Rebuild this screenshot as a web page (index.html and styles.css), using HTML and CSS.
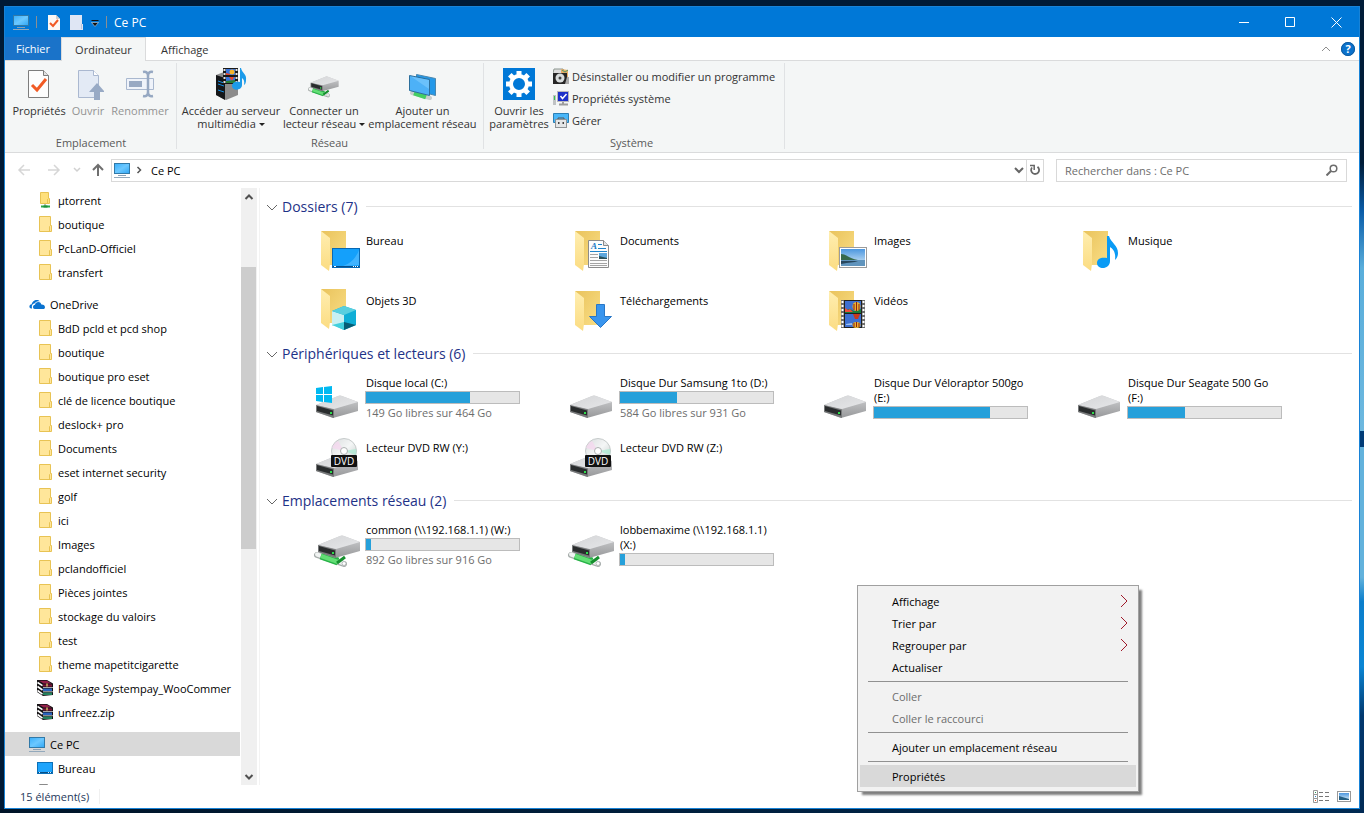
FILE: index.html
```html
<!DOCTYPE html>
<html lang="fr">
<head>
<meta charset="utf-8">
<title>Ce PC</title>
<link rel="stylesheet" href="styles.css">
</head>
<body>
<svg class="defs" aria-hidden="true">
  <defs>
    <linearGradient id="gScreen" x1="0" y1="0" x2="1" y2="1"><stop offset="0" stop-color="#38aefb"/><stop offset=".5" stop-color="#6cc8ff"/><stop offset="1" stop-color="#2fa6f5"/></linearGradient>
    <linearGradient id="gBack" x1="0" y1="0" x2="1" y2="1"><stop offset="0" stop-color="#e9c35c"/><stop offset="1" stop-color="#fade86"/></linearGradient>
    <linearGradient id="gFront" x1="0" y1="0" x2="0" y2="1"><stop offset="0" stop-color="#ffeeb0"/><stop offset="1" stop-color="#fbdc82"/></linearGradient>
    <linearGradient id="gTop" x1="0" y1="0" x2="1" y2="1"><stop offset="0" stop-color="#d4d5d7"/><stop offset="1" stop-color="#e6e7e9"/></linearGradient>
    <linearGradient id="gSide" x1="0" y1="0" x2="0" y2="1"><stop offset="0" stop-color="#cfd0d2"/><stop offset="1" stop-color="#97989a"/></linearGradient>
    <linearGradient id="gDisc" x1="0" y1="0" x2="1" y2="1"><stop offset="0" stop-color="#d9dcdd"/><stop offset=".5" stop-color="#f4f6f6"/><stop offset="1" stop-color="#bfc8c6"/></linearGradient>
    <linearGradient id="gSky" x1="0" y1="0" x2="0" y2="1"><stop offset="0" stop-color="#4c97df"/><stop offset="1" stop-color="#d9ecf8"/></linearGradient>
  </defs>
  <symbol id="pc" viewBox="0 0 16 16"><rect x=".5" y="1.500" width="15" height="10" fill="url(#gScreen)" stroke="#3179a8"/><path d="M4 13.500h8" stroke="#8aa0b4"/><path d="M0 15.500h16" stroke="#93a9bc"/></symbol>
  <symbol id="folder" viewBox="0 0 16 16"><path d="M2.500.5h11v9h1v6h-12z" fill="#ffe69a" stroke="#e8c354"/><path d="M12.500 15V10.500l1-1" fill="none" stroke="#e8c354"/></symbol>
  <symbol id="netfolder" viewBox="0 0 16 16"><path d="M3.500.5h8v6h1v5h-9z" fill="#ffe07c" stroke="#e8c354"/><path d="M10.500 11V7" stroke="#e8c354"/><path d="M8 12v2" stroke="#6f8b72"/><path d="M4 14.500h9" stroke="#2ba84a" stroke-width="2"/><path d="M6.500 13.500h4v2h-4z" fill="#1f8f3b"/></symbol>
  <symbol id="onedrive" viewBox="0 0 16 16"><path d="M2.200 12.500C-.6 12 .1 8.300 2.700 8.300 3 4.500 8.300 2.300 10.800 5.300 7.500 4.500 6 6.800 5.400 7.500 3.300 7.600 2.300 10 3.100 12.500z" fill="#0a72cf"/><path d="M5.800 13C3.300 13 3.500 8.700 6 8.700 6.600 5.300 11.600 5 12.400 8.500 16.800 8.400 16.800 13 14.200 13z" fill="#0a72cf"/></symbol>
  <symbol id="rar" viewBox="0 0 16 16"><path d="M0 0h10l6 3.500V15l-10 1-6-4z" fill="#141214"/><path d="M2 .8h8l4.500 2.700H6.500z" fill="#94204a"/><path d="M6 4.500h9v2H6z" fill="#7d1338"/><path d="M6 8.500h9v2.500H6z" fill="#2a63bd"/><path d="M6 12.500h9V15H6z" fill="#23805c"/><path d="M.5 2.500l5 3.200M.5 6.500l5 3.500M.5 10.500l5 3.700" stroke="#fff" stroke-width="1.600"/><path d="M6 7.500h10M6 11.700h10" stroke="#e9e9e9" stroke-width=".7"/><path d="M9 3.500h2v3H9z" fill="#d8c068" opacity=".7"/></symbol>
  <symbol id="desk16" viewBox="0 0 16 16"><rect x=".5" y="2.500" width="15" height="11" fill="#1ea4fc" stroke="#0b70b8"/><path d="M1 12.500h14" stroke="#084e86"/><path d="M2 12.500h1m8 0h1m1 0h1" stroke="#d5ecfb"/></symbol>
  <symbol id="page16" viewBox="0 0 16 16"><path d="M2.500.5h8l3 3v12h-11z" fill="#fff" stroke="#8a8a8a"/></symbol>

  <symbol id="fbase" viewBox="0 0 48 48"><path d="M8 5h25v34H16z" fill="url(#gBack)"/><path d="M8 5l9 7v26l-1 7-8-6z" fill="url(#gFront)"/></symbol>
  <symbol id="f-desktop" viewBox="0 0 48 48"><use href="#fbase"/><rect x="19.500" y="22.500" width="27" height="19" fill="#14a0fb" stroke="#0868b3"/><path d="M46 24v15l-16 1c8-3 13-8 16-16z" fill="#4cb8ff" opacity=".8"/><path d="M20 40.500h26" stroke="#064f8b"/><path d="M21 40.500h2m17 0h1m1 0h1m1 0h1" stroke="#fff"/></symbol>
  <symbol id="f-docs" viewBox="0 0 48 48"><use href="#fbase"/><path d="M21.500 14.500h15l5 5v22h-20z" fill="#fcfcfc" stroke="#8b8b8b"/><path d="M36.500 14.500v5h5" fill="#e3e3e3" stroke="#8b8b8b"/><path d="M31 18.500h4m-4 4h8M23 25.500h17" stroke="#1d83cb"/><path d="M23 28.500h8m-8 3h8m-8 3h17m-17 3h17m-17 2h17" stroke="#a4a4a4"/><rect x="32" y="27" width="8" height="6" fill="#5ca6dc"/><path d="M32 30l8 2v1h-8z" fill="#28505a"/></symbol>
  <symbol id="f-images" viewBox="0 0 48 48"><use href="#fbase"/><rect x="18.500" y="21.500" width="27" height="20" fill="#fff" stroke="#9b9b9b"/><rect x="20" y="23" width="24" height="17" fill="url(#gSky)"/><path d="M20 28c5 0 7 4 17 6H20z" fill="#37694c"/><path d="M20 34h24v6H20z" fill="#6094bd"/><path d="M20 38c8-2 13-1 17-3H20z" fill="#28475d"/></symbol>
  <symbol id="f-music" viewBox="0 0 48 48"><use href="#fbase"/><path d="M32 10h2c2 7 9 9 9 17 0 3-1 5-3 7 1-8-2-11-5-13v14c0 9-13 9-13 2 0-5 5-6 10-5z" fill="#0a9bf5"/></symbol>
  <symbol id="f-3d" viewBox="0 0 48 48"><use href="#fbase" y="-2"/><path d="M19 25l12-5 12 4v15l-12 5-12-6z" fill="#0faed6"/><path d="M19 25l12 4v8l-12 3z" fill="#c9f0f2"/><path d="M19 25l12-5 12 4-12 5z" fill="#59cfdf"/><path d="M19 39l12-3v8z" fill="#43d0dd"/><path d="M31 36l12 3-12 5z" fill="#075d75"/></symbol>
  <symbol id="f-down" viewBox="0 0 48 48"><use href="#fbase"/><path d="M29.500 18.500h8v12h7L33.500 41.500 22.500 30.500h7z" fill="#3995ee" stroke="#2877c7"/></symbol>
  <symbol id="film" viewBox="0 0 24 28"><path d="M0 0h24v28H0z" fill="#6c6c6c"/><path d="M1.500 1v27M22.500 1v27" stroke="#fff" stroke-width="2" stroke-dasharray="2 2"/><path d="M3 0h18v28H3z" fill="#20201d"/><path d="M4 1h16v12H4zM4 14h16v13H4z" fill="#3d6fd0"/><path d="M4 10l5-1 4 2 7-2v4H4z" fill="#1c7c38"/><path d="M4 8l3 2 2-1 3 3H4z" fill="#f04c38"/><ellipse cx="15.500" cy="6.500" rx="4" ry="4.500" fill="#e9b32c"/><path d="M13 4v6m2.500-8v9m2.500-7v6" stroke="#8d2018"/><path d="M12 14h7l-2 5h-3z" fill="#c9391d"/><path d="M5 24l6-1v2H5z" fill="#9cc0ee"/><ellipse cx="15.500" cy="25" rx="4" ry="3" fill="#e9b32c"/><path d="M13 23v4m2.500-5v5m2.500-4v4" stroke="#8d2018"/></symbol>
  <symbol id="f-video" viewBox="0 0 48 48"><use href="#fbase"/><use href="#film" x="20" y="14" width="24" height="28"/></symbol>

  <symbol id="drivebody" viewBox="0 0 48 48"><path d="M3 32L25 23q2-1 4 0l16 6v9L20 45 3 39z" fill="url(#gSide)"/><path d="M3 32L25 23q2-1 4 0l16 6-24 7z" fill="url(#gTop)"/><path d="M3 32l18 4.500V45L3 39z" fill="#77797a"/><path d="M4 33l16 4.500v5L4 38z" fill="#292c2d"/><rect x="17" y="39" width="2" height="2" fill="#2edc4c"/></symbol>
  <symbol id="drive-c" viewBox="0 0 48 48"><use href="#drivebody"/><path d="M3 15l7-1v7H3zM11 14l8-1v8h-8zM3 22h7v7l-7-1zM11 22h8v8l-8-1z" fill="#00b9f1"/></symbol>
  <symbol id="dvd" viewBox="0 0 48 48"><use href="#drivebody" y="-1"/><circle cx="31" cy="18" r="12.500" fill="url(#gDisc)" stroke="#c6cbcb"/><path d="M31 18l-12-3a12 12 0 0 1 6-7z" fill="#f6d6ef" opacity=".7"/><path d="M31 18l12-2a12 12 0 0 1 0 6z" fill="#a8ead0" opacity=".7"/><circle cx="31" cy="18" r="3.500" fill="#fff" stroke="#adb1b1"/><rect x="18" y="22" width="26" height="12" rx="1" fill="#111"/></symbol>
  <symbol id="netpipe" viewBox="0 0 48 48"><path d="M4 35l27 9" stroke="#a7adab" stroke-width="6" stroke-linecap="round"/><path d="M4 34.500l27 9" stroke="#f0f3f2" stroke-width="4" stroke-linecap="round"/><path d="M8 35.500l17 6" stroke="#27b347" stroke-width="8"/><path d="M8 36l17 6" stroke="#63de75" stroke-width="4"/><path d="M24 43l8-6" stroke="#158f2d" stroke-width="3"/><circle cx="31" cy="43.500" r="2" fill="#fff" stroke="#b4baba"/></symbol>
  <symbol id="netdrive" viewBox="0 0 48 48"><use href="#netpipe"/><use href="#drivebody" x="2" y="-7"/></symbol>

  <symbol id="r-props" viewBox="0 0 32 32"><path d="M5.500 2.500h15l5 5v22h-20z" fill="#fdfdfd" stroke="#7d7d7d"/><path d="M20.500 2.500v5h5" fill="#e2e2e2" stroke="#7d7d7d"/><path d="M9 17l5 5 9-11" fill="none" stroke="#f15a24" stroke-width="3"/></symbol>
  <symbol id="r-open" viewBox="0 0 32 32"><path d="M6.500 2.500h15l5 5v22h-20z" fill="#e3eaf5" stroke="#aab8d0"/><path d="M21.500 2.500v5h5" fill="#fff" stroke="#aab8d0"/><path d="M25 15l8 9h-5v8h-6v-8h-5z" fill="#98aac5"/></symbol>
  <symbol id="r-rename" viewBox="0 0 32 32"><path d="M2.500 10.500h27v11h-27z" fill="#eff3fa" stroke="#a9b8cf"/><rect x="5" y="13" width="13" height="6" fill="#98a9c3"/><path d="M19 4q5-1 5 4v16q0 5-5 4M29 4q-5-1-5 4v16q0 5 5 4" fill="none" stroke="#96a8c2" stroke-width="2.500"/></symbol>
  <symbol id="r-media" viewBox="0 0 32 32"><path d="M1 7l8-3 14 4v19l-12 5-10-5z" fill="#8c8c8c"/><path d="M1 7l9 3v22l-9-5z" fill="#151719"/><path d="M3 13l6 2m-6 1l6 2m-6 4l6 2" stroke="#148ee4"/><path d="M8 0h15v16H8z" fill="#191919"/><path d="M9.500 1v15m12-15v15" stroke="#e1e1e1" stroke-width="2" stroke-dasharray="2 2"/><path d="M11 1h9v6h-9zM11 9h9v6h-9z" fill="#3975dc"/><circle cx="17" cy="4" r="2.500" fill="#f5b42a"/><path d="M11 5l4 1v1h-4zM14 9h5l-2 4z" fill="#ea472a"/><path d="M11 13l9-1v3h-9z" fill="#277c38"/><path d="M25 0h1c1 5 6 6 5 12q0 4-2 5 1-5-2-7v7c0 6-10 6-10 1 0-4 4-5 8-4z" fill="#1b9bea"/></symbol>
  <symbol id="r-netpc" viewBox="0 0 32 32"><path d="M5 25l18 5" stroke="#c9cecd" stroke-width="4" stroke-linecap="round"/><path d="M7 25l12 4" stroke="#45ce63" stroke-width="5"/><path d="M9.500 6.500l19 4v17l-19-5z" fill="#2498e8" stroke="#4b87ae"/><path d="M2.500 7.500l20 4v16l-20-5z" fill="#4db1f7" stroke="#2c6f9c"/><path d="M22 12v9L4 8.500z" fill="#89d1ff" opacity=".5"/></symbol>
  <symbol id="r-gear" viewBox="0 0 32 32"><path d="M0 0h32v32H0z" fill="#0078d7"/><circle cx="16" cy="16" r="8" fill="none" stroke="#fff" stroke-width="4"/><path d="M16 3v4M16 25v4M3 16h4M25 16h4M6.800 6.800l3 3M22.200 22.200l3 3M6.800 25.200l3-3M22.200 9.800l3-3" stroke="#fff" stroke-width="5"/></symbol>
  <symbol id="s-uninst" viewBox="0 0 16 16"><path d="M1 1h9l3 3v12H0V5z" fill="#ddd" stroke="#8d9790"/><path d="M8 1l7 1v7H8z" fill="#e7ad68"/><path d="M9 2l3 2 3-2" stroke="#519c67" fill="none"/><rect y="5" width="14" height="11" fill="#262626"/><circle cx="7" cy="10" r="4.500" fill="#d9dddd"/><circle cx="7" cy="10" r="1.500" fill="#444"/><path d="M14 9h2v7h-4z" fill="#aaa"/></symbol>
  <symbol id="s-props" viewBox="0 0 16 16"><rect x="4.500" y="1.500" width="11" height="10" fill="#1d31c9" stroke="#b9b9bd"/><path d="M7.500 6l2 2.500 4-4.500" fill="none" stroke="#fff" stroke-width="1.500"/><path d="M6 14.500h9M10 12v3" stroke="#9c9c9c" stroke-width="2"/><path d="M0 5h3v10H0z" fill="#bfc2c4"/><path d="M1.500 6v4" stroke="#36ca4c"/></symbol>
  <symbol id="s-manage" viewBox="0 0 16 16"><path d="M.5 1.500h15v9H.5z" fill="#49b6f8" stroke="#2c7fb5"/><path d="M5 8V6h6v2" fill="none" stroke="#555"/><rect x="2.500" y="7.500" width="11" height="8" fill="#e4e6e7" stroke="#909496"/><path d="M5 10h1.500v2H5zM9.500 10H11v2H9.500z" fill="#444"/></symbol>
  <symbol id="chev" viewBox="0 0 12 12"><path d="M1 4l5 5 5-5" fill="none" stroke="currentColor"/></symbol>
</svg>

<main class="window">
  <header class="titlebar">
    <svg class="i16"><use href="#pc"/></svg>
    <span class="tsep"></span>
    <button class="quick" aria-label="Propriétés"><svg class="i16" viewBox="0 0 16 16"><path d="M2 1h8l4 4v11H2z" fill="#fcf8f5"/><path d="M10 1v4h4" fill="#d3cdca"/><path d="M4 9l3 3 5-6" fill="none" stroke="#f15a24" stroke-width="2"/></svg></button>
    <button class="quick" aria-label="Nouveau dossier"><svg class="i16" viewBox="0 0 16 16"><path d="M1 1h12v9h1v6H1z" fill="#dfe6f4"/><path d="M12.500 15v-5" stroke="#b9c6df"/></svg></button>
    <button class="quick more" aria-label="Personnaliser"><svg viewBox="0 0 8 8"><path d="M.5 1.500h7" stroke="#111"/><path d="M.5 3.500h7L4 7.500z" fill="#111" stroke="#e8f2fc" stroke-width=".5"/></svg></button>
    <span class="tsep last"></span>
    <h1 class="title">Ce PC</h1>
    <div class="caption">
      <button aria-label="Réduire"><svg viewBox="0 0 11 11"><path d="M0 5.500h10" stroke="#fff"/></svg></button>
      <button aria-label="Agrandir"><svg viewBox="0 0 11 11"><path d="M.5.5h9v9h-9z" fill="none" stroke="#fff"/></svg></button>
      <button aria-label="Fermer"><svg viewBox="0 0 11 11"><path d="M.5.5l10 10m0-10l-10 10" stroke="#fff"/></svg></button>
    </div>
  </header>

  <nav class="tabs">
    <button class="tab file">Fichier</button>
    <button class="tab active">Ordinateur</button>
    <button class="tab">Affichage</button>
    <div class="tabs-end">
      <button class="collapse" aria-label="Réduire le ruban"><svg viewBox="0 0 12 12"><path d="M2 8l4-4 4 4" fill="none" stroke="#8e8e8e"/></svg></button>
      <button class="help" aria-label="Aide">?</button>
    </div>
  </nav>

  <section class="ribbon">
    <div class="group g-place">
      <div class="tools">
        <button class="tool w56"><svg class="i32"><use href="#r-props"/></svg><span>Propriétés</span></button>
        <button class="tool w42" disabled><svg class="i32"><use href="#r-open"/></svg><span>Ouvrir</span></button>
        <button class="tool w62" disabled><svg class="i32"><use href="#r-rename"/></svg><span>Renommer</span></button>
      </div>
      <div class="group-name">Emplacement</div>
    </div>
    <div class="group g-net">
      <div class="tools">
        <button class="tool w100"><svg class="i32"><use href="#r-media"/></svg><span>Accéder au serveur<br>multimédia <i class="caret"></i></span></button>
        <button class="tool w86"><svg class="i32" viewBox="1 3 48 48"><use href="#netdrive" width="48" height="48"/></svg><span>Connecter un<br>lecteur réseau <i class="caret"></i></span></button>
        <button class="tool w110"><svg class="i32"><use href="#r-netpc"/></svg><span>Ajouter un<br>emplacement réseau</span></button>
      </div>
      <div class="group-name">Réseau</div>
    </div>
    <div class="group g-sys">
      <div class="tools">
        <button class="tool w62"><svg class="i32"><use href="#r-gear"/></svg><span>Ouvrir les<br>paramètres</span></button>
        <div class="list">
          <button><svg class="i16"><use href="#s-uninst"/></svg>Désinstaller ou modifier un programme</button>
          <button><svg class="i16"><use href="#s-props"/></svg>Propriétés système</button>
          <button><svg class="i16"><use href="#s-manage"/></svg>Gérer</button>
        </div>
      </div>
      <div class="group-name">Système</div>
    </div>
  </section>

  <div class="navbar">
    <button class="nav" aria-label="Précédent"><svg viewBox="0 0 14 14"><path d="M13 7H2m5-5L2 7l5 5" fill="none" stroke="#d6d6d6" stroke-width="1.500"/></svg></button>
    <button class="nav" aria-label="Suivant"><svg viewBox="0 0 14 14"><path d="M1 7h11M7 2l5 5-5 5" fill="none" stroke="#d6d6d6" stroke-width="1.500"/></svg></button>
    <button class="nav small" aria-label="Emplacements récents"><svg viewBox="0 0 14 14"><path d="M4 5l3 3 3-3" fill="none" stroke="#d0d0d0" stroke-width="1.500"/></svg></button>
    <button class="nav up" aria-label="Dossier parent"><svg viewBox="0 0 14 14"><path d="M7 13V2M2 7l5-5 5 5" fill="none" stroke="#6f6f6f" stroke-width="2"/></svg></button>
    <div class="address">
      <svg class="i16"><use href="#pc"/></svg>
      <svg class="crumb" viewBox="0 0 8 8"><path d="M2.500 1l3 3-3 3" fill="none" stroke="#555" stroke-width="1.500"/></svg>
      <button class="crumb-name">Ce PC</button>
      <button class="drop" aria-label="Historique"><svg viewBox="0 0 10 10"><path d="M1 3l4 4 4-4" fill="none" stroke="#666" stroke-width="2"/></svg></button>
      <button class="refresh" aria-label="Actualiser"><svg viewBox="0 0 12 12"><path d="M8.500 2.800A4 4 0 1 1 3 3.500" fill="none" stroke="#666" stroke-width="1.800"/><path d="M1 1.500h4.200V6" fill="none" stroke="#666" stroke-width="1.500"/></svg></button>
    </div>
    <label class="search">
      <input type="search" aria-label="Rechercher" placeholder="Rechercher dans : Ce PC">
      <svg viewBox="0 0 12 12"><circle cx="7.500" cy="4.500" r="3.300" fill="none" stroke="#6d6d6d" stroke-width="1.500"/><path d="M5 7l-4.500 4.500" stroke="#6d6d6d" stroke-width="2"/></svg>
    </label>
  </div>

  <div class="body">
    <nav class="tree">
      <ul>
        <li><a href="#"><svg class="i16"><use href="#netfolder"/></svg>µtorrent</a></li>
        <li><a href="#"><svg class="i16"><use href="#folder"/></svg>boutique</a></li>
        <li><a href="#"><svg class="i16"><use href="#folder"/></svg>PcLanD-Officiel</a></li>
        <li><a href="#"><svg class="i16"><use href="#folder"/></svg>transfert</a></li>
        <li class="root"><a href="#"><svg class="i16"><use href="#onedrive"/></svg>OneDrive</a></li>
        <li><a href="#"><svg class="i16"><use href="#folder"/></svg>BdD pcld et pcd shop</a></li>
        <li><a href="#"><svg class="i16"><use href="#folder"/></svg>boutique</a></li>
        <li><a href="#"><svg class="i16"><use href="#folder"/></svg>boutique pro eset</a></li>
        <li><a href="#"><svg class="i16"><use href="#folder"/></svg>clé de licence boutique</a></li>
        <li><a href="#"><svg class="i16"><use href="#folder"/></svg>deslock+ pro</a></li>
        <li><a href="#"><svg class="i16"><use href="#folder"/></svg>Documents</a></li>
        <li><a href="#"><svg class="i16"><use href="#folder"/></svg>eset internet security</a></li>
        <li><a href="#"><svg class="i16"><use href="#folder"/></svg>golf</a></li>
        <li><a href="#"><svg class="i16"><use href="#folder"/></svg>ici</a></li>
        <li><a href="#"><svg class="i16"><use href="#folder"/></svg>Images</a></li>
        <li><a href="#"><svg class="i16"><use href="#folder"/></svg>pclandofficiel</a></li>
        <li><a href="#"><svg class="i16"><use href="#folder"/></svg>Pièces jointes</a></li>
        <li><a href="#"><svg class="i16"><use href="#folder"/></svg>stockage du valoirs</a></li>
        <li><a href="#"><svg class="i16"><use href="#folder"/></svg>test</a></li>
        <li><a href="#"><svg class="i16"><use href="#folder"/></svg>theme mapetitcigarette</a></li>
        <li><a href="#"><svg class="i16"><use href="#rar"/></svg>Package Systempay_WooCommer</a></li>
        <li><a href="#"><svg class="i16"><use href="#rar"/></svg>unfreez.zip</a></li>
        <li class="root selected"><a href="#"><svg class="i16"><use href="#pc"/></svg>Ce PC</a></li>
        <li><a href="#"><svg class="i16"><use href="#desk16"/></svg>Bureau</a></li>
        <li><a href="#" aria-label="Dossier suivant"><svg class="i16"><use href="#page16"/></svg></a></li>
      </ul>
    </nav>
    <div class="scroll">
      <button aria-label="Défiler vers le haut"><svg viewBox="0 0 10 10"><path d="M1.500 7L5 3.500 8.500 7" fill="none" stroke="#505050" stroke-width="2"/></svg></button>
      <div class="track"><div class="thumb"></div></div>
      <button aria-label="Défiler vers le bas"><svg viewBox="0 0 10 10"><path d="M1.500 3L5 6.500 8.500 3" fill="none" stroke="#505050" stroke-width="2"/></svg></button>
    </div>

    <section class="content">
      <h2><svg class="i12"><use href="#chev"/></svg>Dossiers (7)</h2>
      <div class="items">
        <div class="item"><svg class="i48"><use href="#f-desktop"/></svg><div class="info">Bureau</div></div>
        <div class="item"><svg class="i48"><use href="#f-docs"/><text x="24" y="23" class="doc-letter">A</text></svg><div class="info">Documents</div></div>
        <div class="item"><svg class="i48"><use href="#f-images"/></svg><div class="info">Images</div></div>
        <div class="item"><svg class="i48"><use href="#f-music"/></svg><div class="info">Musique</div></div>
        <div class="item"><svg class="i48"><use href="#f-3d"/></svg><div class="info">Objets 3D</div></div>
        <div class="item"><svg class="i48"><use href="#f-down"/></svg><div class="info">Téléchargements</div></div>
        <div class="item"><svg class="i48"><use href="#f-video"/></svg><div class="info">Vidéos</div></div>
      </div>
      <h2><svg class="i12"><use href="#chev"/></svg>Périphériques et lecteurs (6)</h2>
      <div class="items">
        <div class="item disk"><svg class="i48"><use href="#drive-c"/></svg><div class="info">Disque local (C:)<div class="bar"><div style="width:68%"></div></div><small>149 Go libres sur 464 Go</small></div></div>
        <div class="item disk"><svg class="i48"><use href="#drivebody"/></svg><div class="info">Disque Dur Samsung 1to (D:)<div class="bar"><div style="width:37%"></div></div><small>584 Go libres sur 931 Go</small></div></div>
        <div class="item disk"><svg class="i48"><use href="#drivebody"/></svg><div class="info">Disque Dur Véloraptor 500go<br>(E:)<div class="bar"><div style="width:76%"></div></div></div></div>
        <div class="item disk"><svg class="i48"><use href="#drivebody"/></svg><div class="info">Disque Dur Seagate 500 Go<br>(F:)<div class="bar"><div style="width:37%"></div></div></div></div>
        <div class="item"><svg class="i48"><use href="#dvd"/><text x="31" y="32" class="dvd-text">DVD</text></svg><div class="info">Lecteur DVD RW (Y:)</div></div>
        <div class="item"><svg class="i48"><use href="#dvd"/><text x="31" y="32" class="dvd-text">DVD</text></svg><div class="info">Lecteur DVD RW (Z:)</div></div>
      </div>
      <h2><svg class="i12"><use href="#chev"/></svg>Emplacements réseau (2)</h2>
      <div class="items">
        <div class="item disk"><svg class="i48"><use href="#netdrive"/></svg><div class="info">common (\\192.168.1.1) (W:)<div class="bar"><div style="width:3%"></div></div><small>892 Go libres sur 916 Go</small></div></div>
        <div class="item disk"><svg class="i48"><use href="#netdrive"/></svg><div class="info">lobbemaxime (\\192.168.1.1)<br>(X:)<div class="bar"><div style="width:3%"></div></div></div></div>
      </div>
    </section>
  </div>

  <footer class="status">
    <span class="count">15 élément(s)</span>
    <div class="views">
      <button aria-label="Détails"><svg viewBox="0 0 16 14"><path d="M.5.5h4v4h-4zM.5 4.500h4v4h-4zM.5 8.500h4v4h-4z" fill="#fff" stroke="#999"/><path d="M2 2.500h1" stroke="#2a9a58"/><path d="M2 6.500h1" stroke="#2a82cc"/><path d="M2 10.500h1" stroke="#e2521e"/><path d="M6 2.500h4m2 0h4M6 6.500h4m2 0h4M6 10.500h4m2 0h4" stroke="#777"/></svg></button>
      <button aria-label="Grandes icônes"><svg viewBox="0 0 16 14"><rect x="1.500" y="1.500" width="13" height="10" fill="#fff" stroke="#999"/><rect x="3" y="3" width="10" height="7" fill="url(#gSky)"/><path d="M3 6l10 3v1H3z" fill="#255f83"/></svg></button>
    </div>
  </footer>

  <div class="menu" role="menu">
    <button role="menuitem">Affichage<svg viewBox="0 0 8 14"><path d="M1 1l6 6-6 6" fill="none" stroke="#a01c2c"/></svg></button>
    <button role="menuitem">Trier par<svg viewBox="0 0 8 14"><path d="M1 1l6 6-6 6" fill="none" stroke="#a01c2c"/></svg></button>
    <button role="menuitem">Regrouper par<svg viewBox="0 0 8 14"><path d="M1 1l6 6-6 6" fill="none" stroke="#a01c2c"/></svg></button>
    <button role="menuitem">Actualiser</button>
    <hr>
    <button role="menuitem" disabled>Coller</button>
    <button role="menuitem" disabled>Coller le raccourci</button>
    <hr>
    <button role="menuitem">Ajouter un emplacement réseau</button>
    <hr>
    <button role="menuitem" class="hover">Propriétés</button>
  </div>
</main>
</body>
</html>
```
FILE: styles.css
```css
* { box-sizing: border-box; }

body {
  margin: 0;
  height: 100vh;
  padding: 6px 4px 4px;
  display: flex;
  font: 11px/15px "Open Sans", "Noto Sans", sans-serif;
  color: #000;
  background:
    linear-gradient(#001c38 0, #001c38 20%, #0a5ca8 26%, #5aaedb 33%, #6db8df 53%, #003b76 53%, #003b76 55%, #63b2dc 55%, #63b2dc 71%, #0b7ecb 74%, #0a86d4 82%, #02386e 88%, #012a55 100%) right / 4px 100% no-repeat,
    linear-gradient(90deg, #001428, #002a52) bottom / 100% 4px no-repeat,
    #001a35;
}

button {
  margin: 0;
  padding: 0;
  border: 0;
  background: none;
  font: inherit;
  color: inherit;
}

a { color: inherit; text-decoration: none; }
svg { display: block; flex: none; }
.defs { position: absolute; width: 0; height: 0; }
.i12 { width: 12px; height: 12px; }
.i16 { width: 16px; height: 16px; }
.i32 { width: 32px; height: 32px; }
.i48 { width: 48px; height: 48px; }

.window {
  position: relative;
  flex: 1;
  min-width: 0;
  display: flex;
  flex-direction: column;
  background: #fff;
  border: 1px solid #1883d7;
}

/* title bar */
.titlebar {
  display: flex;
  align-items: center;
  height: 30px;
  padding-left: 8px;
  background: #0078d7;
  color: #fff;
}
.tsep { width: 1px; height: 12px; margin: 0 9px 0 7px; background: #8a8f94; }
.tsep.last { margin: 0 7px 0 5px; }
.quick { margin-right: 7px; }
.quick.more { margin: 2px 2px 0 -1px; }
.quick.more svg { width: 8px; height: 8px; }
.title { margin: 0; font-size: 12px; font-weight: 400; }
.caption { display: flex; margin-left: auto; height: 100%; }
.caption button { width: 46px; display: flex; align-items: center; justify-content: center; }
.caption svg { width: 11px; height: 11px; }

/* tabs */
.tabs { display: flex; height: 24px; border-bottom: 1px solid #dadbdc; color: #333; }
.tab { padding: 0 15px; height: 24px; }
.tab.file { width: 56px; padding: 0; height: 23px; background: #1a73c9; color: #fff; }
.tab.active { width: 85px; padding: 0; background: #f4f6f6; border: 1px solid #dadbdc; border-bottom: 0; }
.tabs-end { display: flex; align-items: center; gap: 9px; margin-left: auto; padding-right: 4px; }
.collapse svg { width: 12px; height: 12px; }
.help { width: 14px; height: 14px; border-radius: 50%; background: #0b72cc; outline: 1px solid #0f5a9c; outline-offset: -1px; color: #fff; font-weight: 700; line-height: 14px; }

/* ribbon */
.ribbon { display: flex; height: 92px; border-bottom: 1px solid #dadbdc; background: #f4f6f6; color: #333; }
.group { display: flex; flex-direction: column; margin: 2px 0 3px; padding: 2px 5px 0 4px; border-right: 1px solid #e0e2e4; }
.g-place { padding-left: 6px; }
.g-sys { padding-right: 9px; }
.tools { display: flex; flex: 1; align-items: flex-start; }
.tool { display: flex; flex-direction: column; align-items: center; gap: 4px; padding-top: 3px; line-height: 13px; white-space: nowrap; }
.tool:disabled { color: #939393; }
.w42 { width: 42px; }
.w56 { width: 56px; }
.w62 { width: 62px; }
.w86 { width: 86px; }
.w100 { width: 100px; }
.w110 { width: 111px; }
.caret { display: inline-block; vertical-align: 2px; border: 3px solid transparent; border-top-color: #222; border-bottom: 0; }
.list { display: flex; flex-direction: column; margin-left: 3px; }
.list button { display: flex; align-items: center; gap: 3px; height: 22px; white-space: nowrap; }
.group-name { line-height: 13px; text-align: center; color: #5a5a5a; }

/* navigation bar */
.navbar { display: flex; align-items: center; height: 35px; padding: 0 12px 1px; }
.nav { width: 30px; display: flex; justify-content: center; }
.nav:first-child { margin-left: -8px; }
.nav svg { width: 14px; height: 14px; }
.nav.small { width: 16px; }
.nav.up { width: 26px; }
.address { display: flex; align-items: center; flex: 1; height: 23px; margin-right: 12px; padding-left: 2px; border: 1px solid #d9d9d9; }
.crumb { width: 8px; height: 8px; margin: 0 8px 0 5px; }
.drop { margin-left: auto; width: 14px; display: flex; justify-content: center; }
.drop svg { width: 10px; height: 10px; }
.refresh { width: 17px; height: 100%; display: flex; align-items: center; justify-content: center; border-left: 1px solid #d9d9d9; }
.refresh svg { width: 12px; height: 12px; }
.search { display: flex; align-items: center; width: 291px; height: 23px; padding: 0 8px; border: 1px solid #d9d9d9; }
.search input { flex: 1; min-width: 0; padding: 0; border: 0; background: none; font: inherit; outline: 0; }
.search input::placeholder { color: #6d6d6d; opacity: 1; }
.search svg { width: 12px; height: 12px; }

/* body */
.body { display: flex; flex: 1; min-height: 0; }
.tree { width: 236px; overflow: hidden; }
.tree ul { margin: 0; padding: 0; list-style: none; }
.tree a { display: flex; align-items: center; gap: 5px; height: 24px; margin-right: 1px; padding-left: 32px; white-space: nowrap; overflow: hidden; }
.tree .root { margin-top: 8px; }
.tree .root a { padding-left: 24px; }
.tree .selected a { background: #d9d9d9; }
.scroll { width: 16px; display: flex; flex-direction: column; background: #f0f0f0; }
.scroll button { height: 17px; display: flex; align-items: center; justify-content: center; }
.scroll svg { width: 10px; height: 10px; }
.track { flex: 1; display: flex; flex-direction: column; }
.thumb { height: 50%; margin: 62px 1px 0 0; background: #cdcdcd; }

.content { flex: 1; min-width: 0; margin-left: 2px; padding: 5px 7px 0 6px; border-left: 1px solid #f3f3f3; }
h2 { display: flex; align-items: center; gap: 4px; height: 27px; margin: 0; font-size: 14px; font-weight: 400; line-height: 20px; color: #1e3287; }
h2::after { content: ""; flex: 1; height: 1px; margin-left: 4px; background: #e2e2e2; }
h2 svg { color: #666; }
.items { display: grid; grid-template-columns: repeat(auto-fill, 254px); grid-auto-rows: 60px; padding-left: 47px; }
.item { display: flex; gap: 5px; padding-top: 6px; white-space: nowrap; }
.item .info { padding-top: 7px; }
.item.disk { align-items: center; padding-top: 0; }
.item.disk .info { padding-top: 0; }
.bar { width: 155px; height: 13px; margin: 1px 0 1px -1px; padding: 0; border: 1px solid #bcbcbc; background: #e6e6e6; }
.bar div { height: 100%; background: #26a0da; }
small { display: block; font-size: 11px; color: #6d6d6d; }
.doc-letter { font: italic bold 9px "Liberation Serif", serif; fill: #1779c4; }
.dvd-text { font: 10px "Open Sans", sans-serif; fill: #fff; text-anchor: middle; }

/* status bar */
.status { display: flex; align-items: center; height: 23px; padding: 0 7px 0 15px; color: #1e395b; }
.count { padding-right: 10px; border-right: 1px solid #f0f0f0; }
.views { display: flex; gap: 7px; margin-left: auto; }
.views svg { width: 16px; height: 14px; }

/* context menu */
.menu {
  position: absolute;
  left: 852px;
  top: 578px;
  width: 282px;
  display: flex;
  flex-direction: column;
  padding: 4px 2px;
  border: 1px solid #a0a0a0;
  background: #f2f2f2;
  box-shadow: 4px 4px 2px -1px rgba(0, 0, 0, .5);
}
.menu button { display: flex; align-items: center; justify-content: space-between; height: 22px; padding: 0 8px 0 32px; text-align: left; }
.menu button:disabled { color: #6d6d6d; }
.menu .hover { background: #d9d9d9; }
.menu svg { width: 8px; height: 14px; }
.menu hr { width: 260px; height: 1px; margin: 3px auto; border: 0; background: #919191; }
```
